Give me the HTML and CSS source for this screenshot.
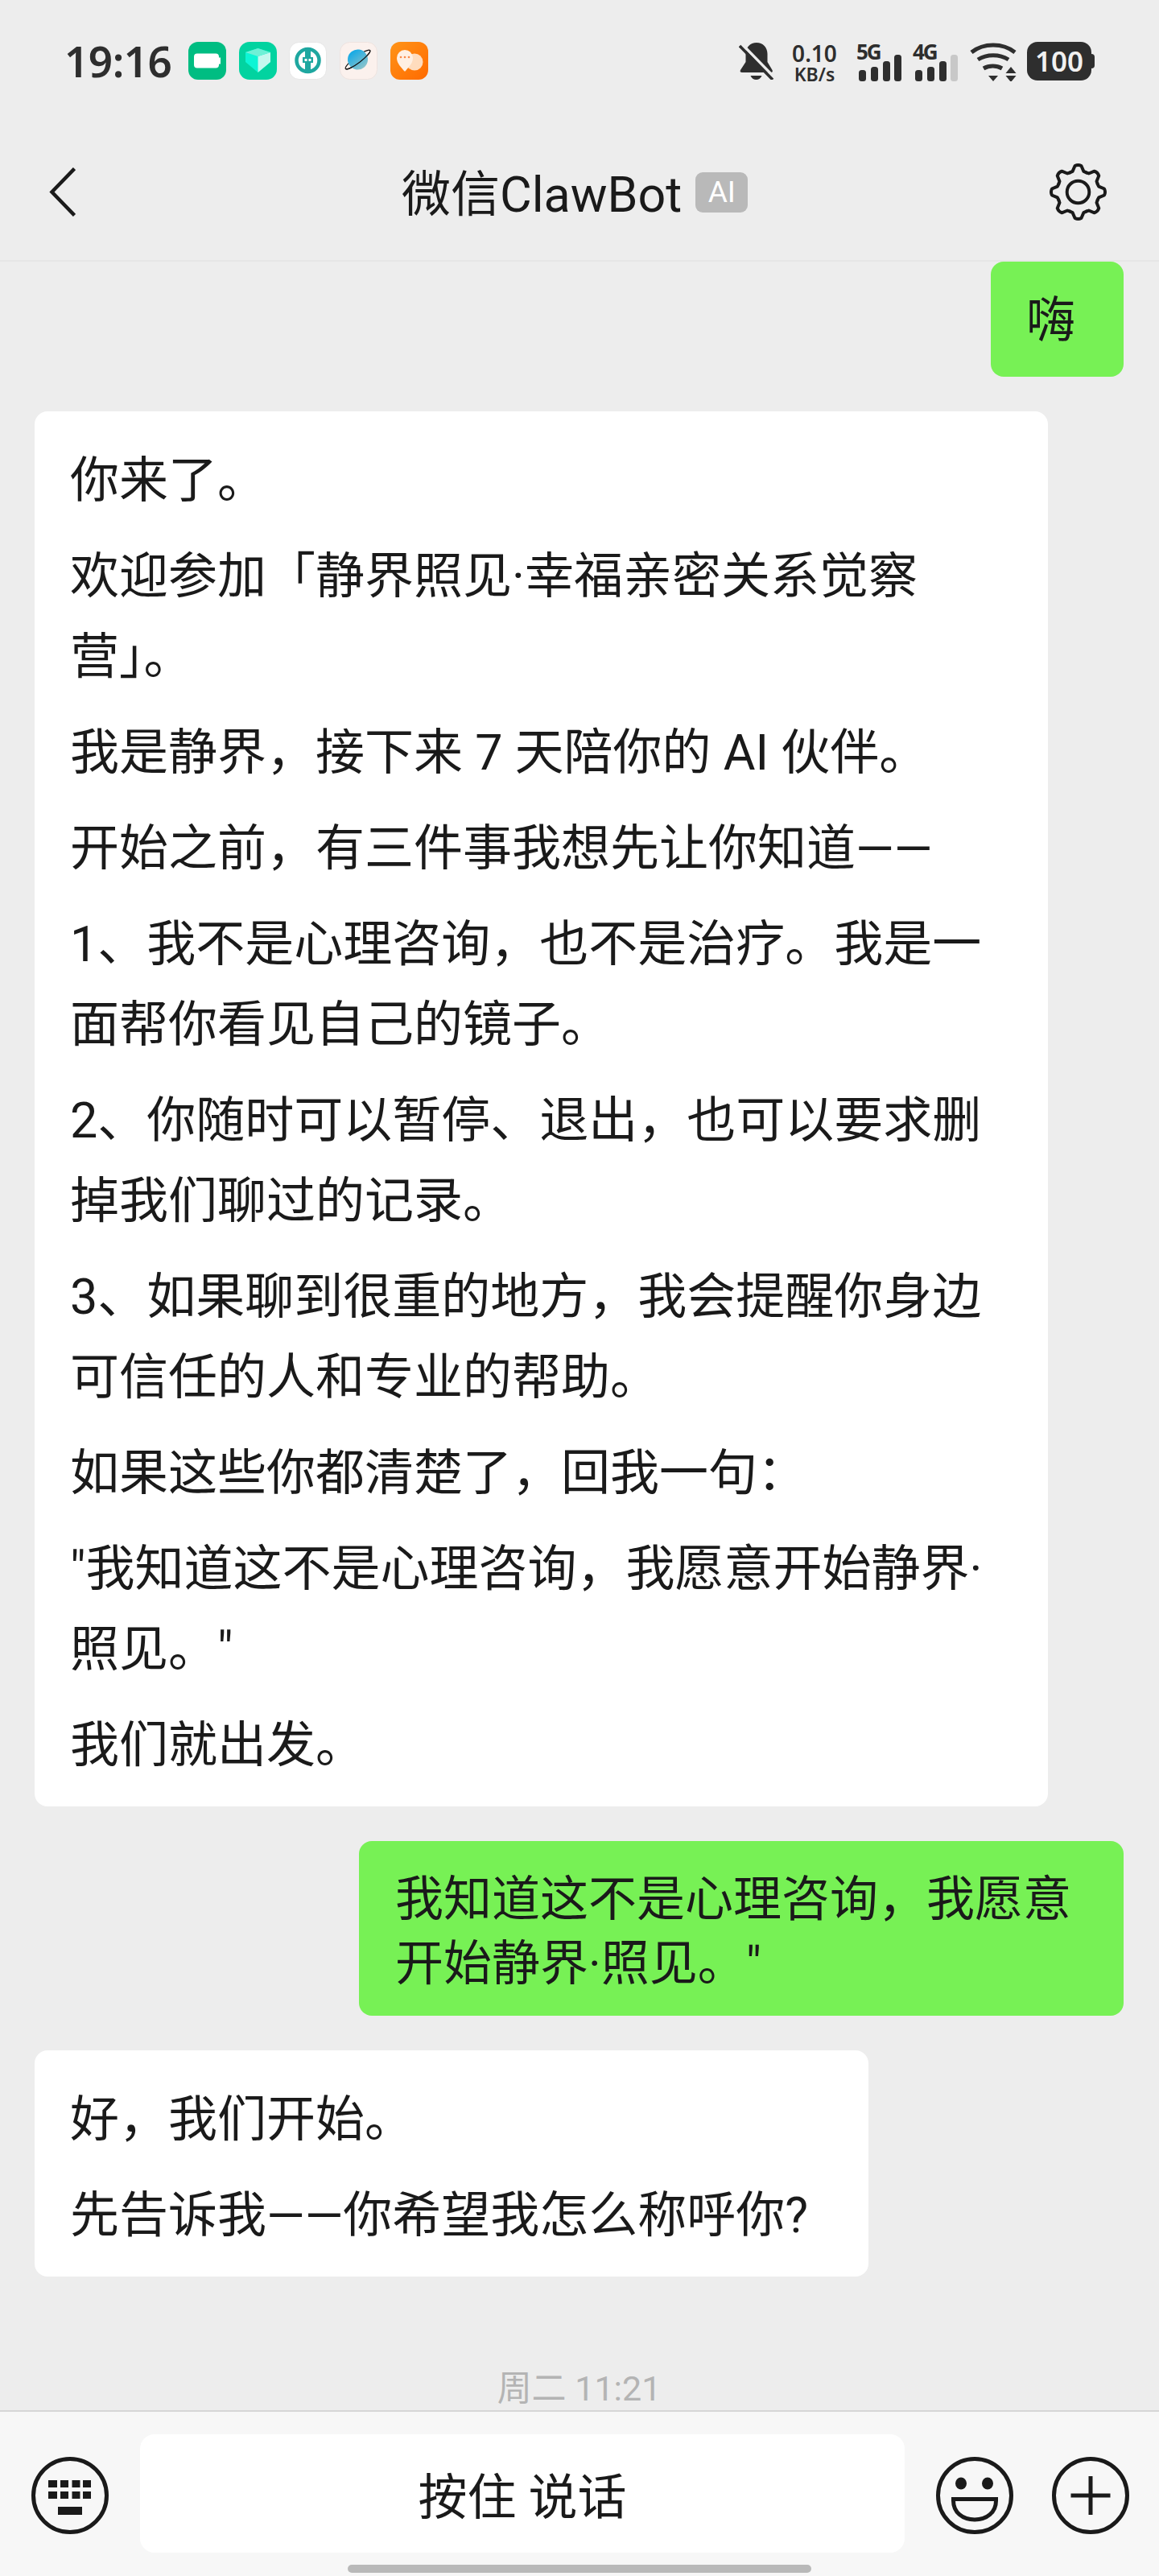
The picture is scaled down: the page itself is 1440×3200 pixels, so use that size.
FILE: index.html
```html
<!DOCTYPE html>
<html lang="zh">
<head>
<meta charset="utf-8">
<title>微信ClawBot</title>
<link rel="stylesheet" href="styles.css">
</head>
<body>
<div class="screen">
  <header class="top">
    <div class="status">
      <div class="status-left">
        <span class="time">19:16</span>
        <div class="apps">
          <svg class="app" viewBox="0 0 47 47"><rect width="47" height="47" rx="12" fill="#00bd82"/><rect x="7" y="14.500" width="31" height="18" rx="4" fill="#fff"/><rect x="38" y="19.500" width="2" height="8" fill="#fff"/></svg>
          <svg class="app" viewBox="0 0 47 47"><rect width="47" height="47" rx="13" fill="#02d3a0"/><path d="M8 13 23.500 8 39 13v12L23.500 38 8 25z" fill="#0df5d5"/><path d="M23.500 18 39 13v12L23.500 38z" fill="#c4f8ee"/><path d="M8 13 23.500 8 39 13l-15.500 5z" fill="#6ff0d6"/></svg>
          <svg class="app" viewBox="0 0 47 47"><rect x=".5" y=".5" width="46" height="46" rx="12" fill="#fff" stroke="#e6e6e6"/><circle cx="23.500" cy="23" r="14" fill="none" stroke="#1ea7a0" stroke-width="4.500"/><path d="M20 7h7v12h3v7h-3v9h-7v-9h-3v-7h3z" fill="#1ea7a0"/><path d="M19.500 21h3v3h-3zM24.500 21h3v3h-3z" fill="#fff"/></svg>
          <svg class="app" viewBox="0 0 47 47"><defs><linearGradient id="pl" x1="0" y1="0" x2="0" y2="1"><stop offset="0" stop-color="#12a9e6"/><stop offset="1" stop-color="#8bc3cb"/></linearGradient></defs><rect x=".5" y=".5" width="46" height="46" rx="12" fill="#fbf1ed" stroke="#eee3df"/><g transform="translate(22.500 22) rotate(-37)"><ellipse rx="19" ry="4" fill="none" stroke="#111" stroke-width="1.200"/><circle r="12.500" fill="url(#pl)"/><path d="M-19 0A19 4 0 0 0 19 0" fill="none" stroke="#111" stroke-width="1.200"/></g></svg>
          <svg class="app" viewBox="0 0 47 47"><defs><linearGradient id="or" x1="0" y1="0" x2="1" y2="1"><stop offset="0" stop-color="#ff9418"/><stop offset="1" stop-color="#ff6a00"/></linearGradient></defs><rect width="47" height="47" rx="12" fill="url(#or)"/><circle cx="30" cy="25" r="10.500" fill="#ffdcbd"/><path d="M17 36C14 32 8 27 8 20a10 10 0 0 1 20 0c0 7-6 12-9 16a1.300 1.300 0 0 1-2 0z" fill="#fff0e3"/><circle cx="13" cy="19" r="1.300" fill="#f98b4a"/><circle cx="18" cy="19" r="1.300" fill="#f98b4a"/><circle cx="23" cy="19" r="1.300" fill="#f98b4a"/></svg>
        </div>
      </div>
      <div class="status-right">
        <svg class="bell" viewBox="0 0 44 46"><path d="M22 0c8 0 13.500 6 13.500 14v10l6 10c1 2 0 3-2 3H4c-2 0-3-1-2-3l6.500-10V14C8.500 6 14 0 22 0z" fill="#2e2e2e"/><path d="M14.500 41h14c-1 3-4 5-7 5s-6-2-7-5z" fill="#2e2e2e"/><path d="M3 1l41 42" stroke="#ededed" stroke-width="3.500"/><path d="M1 4l41 42" stroke="#2e2e2e" stroke-width="3.500"/></svg>
        <div class="speed"><span class="speed-val">0.10</span><span class="speed-unit">KB/s</span></div>
        <div class="net">
          <span class="net-label">5G</span>
          <svg class="bars" viewBox="0 0 53 33"><rect x="0" y="19" width="9" height="14" rx="3.500"/><rect x="15" y="15" width="9" height="18" rx="3.500"/><rect x="30" y="8" width="9" height="25" rx="3.500"/><rect x="44" y="0" width="9" height="33" rx="3.500"/></svg>
        </div>
        <div class="net net-4g">
          <span class="net-label">4G</span>
          <svg class="bars" viewBox="0 0 53 33"><rect x="0" y="19" width="9" height="14" rx="3.500"/><rect x="15" y="15" width="9" height="18" rx="3.500"/><rect x="30" y="8" width="9" height="25" rx="3.500"/><rect class="off" x="44" y="0" width="9" height="33" rx="3.500"/></svg>
        </div>
        <svg class="wifi" viewBox="0 0 58 48"><g fill="none" stroke="#2e2e2e" stroke-width="5"><path d="M2 12C17 0 41 0 56 12"/><path d="M10 21c11-7 27-7 38 0"/><path d="M17 32c7-4 16-4 23 0"/></g><path d="M23 41h12l-6 7zM51 30l6.500 8h-13zM44.500 41h13L51 49z" fill="#2e2e2e"/></svg>
        <div class="battery"><span class="battery-val">100</span></div>
      </div>
    </div>
    <nav class="nav">
      <svg class="back" viewBox="0 0 33 61"><path d="M31.500 1.500 3.500 30.500l28 29" fill="none" stroke="#1a1a1a" stroke-width="4.500"/></svg>
      <div class="title"><span class="title-text">微信ClawBot</span><span class="ai">AI</span></div>
      <svg class="gear" viewBox="-37 -37 74 74">
        <defs><path id="tooth" d="M-10.100-24.500-7-26-4-33Q0-35 4-33L7-26 10.100-24.500"/></defs>
        <g fill="none" stroke="#1a1a1a" stroke-width="4" stroke-linejoin="round" stroke-linecap="round">
          <use href="#tooth"/><use href="#tooth" transform="rotate(45)"/><use href="#tooth" transform="rotate(90)"/><use href="#tooth" transform="rotate(135)"/><use href="#tooth" transform="rotate(180)"/><use href="#tooth" transform="rotate(225)"/><use href="#tooth" transform="rotate(270)"/><use href="#tooth" transform="rotate(315)"/>
          <circle r="14"/>
        </g>
      </svg>
    </nav>
  </header>

  <main class="chat">
    <div class="row row-me first"><div class="bubble me hi">嗨</div></div>
    <div class="row row-bot">
      <div class="bubble bot long">
        <p>你来了。</p>
        <p>欢迎参加「静界照见·幸福亲密关系觉察营」。</p>
        <p>我是静界，接下来 7 天陪你的 AI 伙伴。</p>
        <p>开始之前，有三件事我想先让你知道——</p>
        <p>1、我不是心理咨询，也不是治疗。我是一面帮你看见自己的镜子。</p>
        <p>2、你随时可以暂停、退出，也可以要求删掉我们聊过的记录。</p>
        <p>3、如果聊到很重的地方，我会提醒你身边可信任的人和专业的帮助。</p>
        <p>如果这些你都清楚了，回我一句：</p>
        <p>"我知道这不是心理咨询，我愿意开始静界·照见。"</p>
        <p>我们就出发。</p>
      </div>
    </div>
    <div class="row row-me"><div class="bubble me reply">我知道这不是心理咨询，我愿意开始静界·照见。"</div></div>
    <div class="row row-bot">
      <div class="bubble bot short">
        <p>好，我们开始。</p>
        <p>先告诉我——你希望我怎么称呼你?</p>
      </div>
    </div>
    <div class="stamp">周二 11:21</div>
  </main>

  <footer class="bar">
    <div class="controls">
      <svg class="ctl" viewBox="0 0 96 96"><circle cx="48" cy="48" r="45.500" fill="none" stroke="#1a1a1a" stroke-width="5"/><g fill="#1a1a1a"><rect x="21" y="29" width="11" height="9"/><rect x="36" y="29" width="10" height="9"/><rect x="50.500" y="29" width="10" height="9"/><rect x="64" y="29" width="10" height="9"/><rect x="21" y="43" width="11" height="9"/><rect x="36" y="43" width="10" height="9"/><rect x="50.500" y="43" width="10" height="9"/><rect x="64" y="43" width="10" height="9"/><rect x="33" y="62" width="30" height="10"/></g></svg>
      <button class="talk" type="button">按住 说话</button>
      <svg class="ctl" viewBox="0 0 96 96"><circle cx="48" cy="48" r="45.500" fill="none" stroke="#1a1a1a" stroke-width="5"/><ellipse cx="31" cy="33" rx="7" ry="7.500" fill="#1a1a1a"/><ellipse cx="64" cy="33" rx="7" ry="7.500" fill="#1a1a1a"/><path d="M21.500 52.500h53v2C74.500 69 63 78 48 78S21.500 69 21.500 54.500z" fill="none" stroke="#1a1a1a" stroke-width="5"/></svg>
      <svg class="ctl" viewBox="0 0 96 96"><circle cx="48" cy="48" r="45.500" fill="none" stroke="#1a1a1a" stroke-width="5"/><path d="M23.500 48h49M48 24v48" fill="none" stroke="#1a1a1a" stroke-width="5"/></svg>
    </div>
    <div class="home"></div>
  </footer>
</div>
</body>
</html>
```
FILE: styles.css
```css
* { box-sizing: border-box; }
html, body { margin: 0; padding: 0; }
body { font-family: "Roboto", "Noto Sans CJK SC", sans-serif; color: #1a1a1a; background: #ededed; }
.screen { width: 1440px; height: 3200px; display: flex; flex-direction: column; overflow: hidden; background: #ededed; }

.top { height: 325px; flex: none; border-bottom: 2px solid #e6e6e6; }
.status { height: 150px; padding: 52px 84px 0 80px; display: flex; justify-content: space-between; align-items: flex-start; }
.status-left { display: flex; align-items: center; height: 47px; }
.time { width: 154px; font-family: "Noto Sans", sans-serif; font-size: 53px; font-weight: 600; letter-spacing: -.5px; color: #2e2e2e; line-height: 47px; }
.apps { display: flex; gap: 15.7px; }
.app { width: 47px; height: 47px; display: block; }
.status-right { display: flex; align-items: flex-start; }
.bell { width: 44px; height: 46px; margin-top: 1px; display: block; }
.speed { width: 56px; margin-left: 22px; display: flex; flex-direction: column; align-items: center; font-family: "Noto Sans", sans-serif; font-weight: 600; color: #2e2e2e; }
.speed-val { font-size: 28px; line-height: 28px; }
.speed-unit { font-size: 23px; line-height: 24px; }
.net { display: grid; width: 56px; height: 49px; margin-left: 24px; color: #2e2e2e; }
.net-4g { margin-left: 14px; }
.net-label, .bars { grid-area: 1 / 1; }
.net-label { font-family: "Noto Sans", sans-serif; font-size: 26px; font-weight: 700; line-height: 24px; letter-spacing: -2px; }
.bars { justify-self: end; align-self: end; width: 53px; height: 33px; fill: #2e2e2e; }
.bars .off { fill: #c8c8c8; }
.wifi { width: 58px; height: 48px; margin-left: 15px; margin-top: 1px; }
.battery { width: 80px; height: 48px; margin-left: 13px; border-radius: 13px; background: #2e2e2e; display: flex; align-items: center; justify-content: center; position: relative; }
.battery::after { content: ""; position: absolute; right: -4px; top: 15px; width: 4px; height: 18px; border-radius: 0 4px 4px 0; background: #2e2e2e; }
.battery-val { color: #f1f1f1; font-family: "Noto Sans", sans-serif; font-weight: 600; font-size: 35px; line-height: 48px; }

.nav { height: 173px; display: flex; align-items: center; padding: 4px 64px 0 61px; }
.back { width: 33px; height: 61px; flex: none; }
.title { margin-left: 405px; display: flex; align-items: center; font-size: 61px; color: #1a1a1a; }
.title-text { line-height: 72px; padding-top: 6px; }
.ai { margin-left: 17px; width: 65px; height: 50px; background: #b9b9b9; color: #fff; border-radius: 9px; font-size: 37px; line-height: 50px; text-align: center; }
.gear { width: 73px; height: 73px; margin-left: auto; flex: none; }

.chat { flex: 1; padding: 0 44px 0 43px; display: flex; flex-direction: column; min-height: 0; }
.row { display: flex; margin-top: 43px; }
.row.first { margin-top: 0; }
.row-me { justify-content: flex-end; }
.row-bot { justify-content: flex-start; }
.bubble { border-radius: 16px; font-size: 61px; line-height: 80px; }
.me { background: #77f155; }
.bot { background: #fff; }
.hi { width: 165px; padding: 33px 44px 30px; }
.long { width: 1259px; padding: 36px 44px 26px; }
.reply { width: 950px; padding: 33px 44px 24px 45px; font-size: 60px; }
.short { width: 1036px; padding: 36px 44px 26px; }
.bot p { margin: 0 0 19px; line-height: 100px; }
.bot p:last-child { margin-bottom: 0; }
.stamp { margin-top: 113px; text-align: center; font-size: 43px; line-height: 52px; color: #b4b4b4; }

.bar { height: 206px; flex: none; background: #f7f7f7; border-top: 2px solid #d6d6d6; }
.controls { display: flex; align-items: center; padding: 28px 0 0 39px; }
.ctl { width: 96px; height: 96px; display: block; flex: none; margin-top: 4px; }
.talk { width: 950px; height: 147px; margin: 0 39px 0 39px; border: 0; border-radius: 18px; background: #fff; font-family: inherit; font-size: 61px; color: #1a1a1a; padding: 0; }
.ctl:last-child { margin-left: 48px; }
.home { margin: 15px 0 0 432px; width: 576px; height: 10px; border-radius: 5px; background: #b9b9b9; }
```
